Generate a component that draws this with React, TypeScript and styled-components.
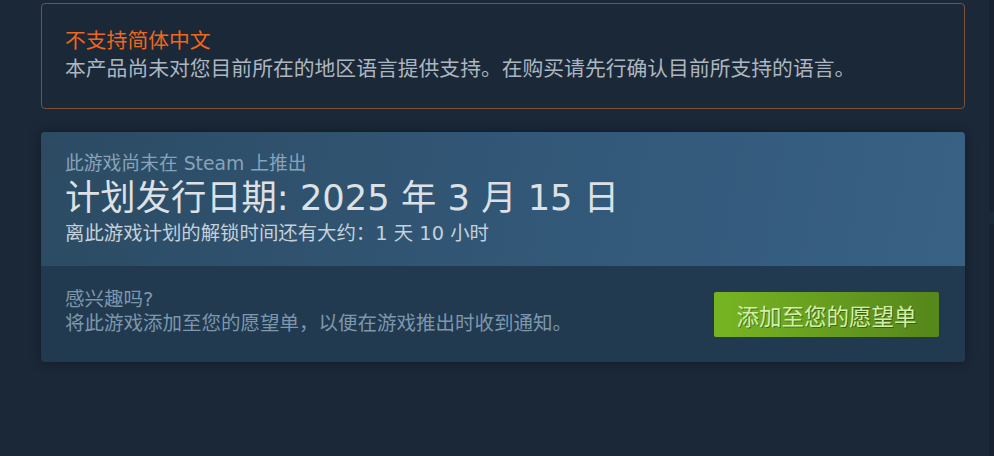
import React, { FC, ReactElement } from 'react';
import styled, { createGlobalStyle } from 'styled-components';

const fontStack = '"DejaVu Sans", "Noto Sans CJK SC", sans-serif';

const GlobalStyle = createGlobalStyle`
  html, body {
    margin: 0;
    padding: 0;
    background: #1b2838;
  }
  body {
    font-family: ${fontStack};
  }
`;

const Page = styled.div`
  display: flex;
  width: 994px;
  height: 456px;
  overflow: hidden;
  background: #1b2838;
`;
const Main = styled.div`
  flex: 1;
  padding: 3px 0 0 41px;
`;
const Column = styled.div`
  width: 924px;
  display: flex;
  flex-direction: column;
  gap: 23px;
`;
const Track = styled.div`
  width: 5px;
  display: flex;
  flex-direction: column;
  gap: 12px;
`;
const TrackPiece = styled.div<{ grow: number }>`
  flex: ${props => props.grow};
  background: #18212f;
`;

const Notice = styled.div`
  border: 1px solid #7b5038;
  border-radius: 4px;
  padding: 21px 23px 27px 23px;
`;
const NoticeTitle = styled.div`
  color: #f0661c;
  font-family: "Noto Sans CJK SC", sans-serif;
  font-size: 20.8px;
  line-height: 28px;
`;
const NoticeText = styled.div`
  color: #acb6c0;
  font-family: "Noto Sans CJK SC", sans-serif;
  font-size: 20.8px;
  line-height: 28px;
`;

const Card = styled.div`
  border-radius: 4px;
  overflow: hidden;
  box-shadow: 0 0 12px rgba(0, 0, 0, 0.35);
`;
const Upper = styled.div`
  background: linear-gradient(100deg, #2c4b63 0%, #33597a 60%, #386184 100%);
  padding: 21px 24px 19px 24px;
`;
const Pre = styled.div`
  color: #87a3ba;
  font-size: 18.8px;
  line-height: 22px;
`;
const Date = styled.div`
  color: #dde1e5;
  font-size: 35.3px;
  line-height: 44px;
  margin-top: 1px;
`;
const Countdown = styled.div`
  color: #c4d0da;
  font-size: 19.4px;
  line-height: 26px;
  margin-top: 1px;
`;
const Lower = styled.div`
  background: #223a4f;
  padding: 22px 26px 25px 24px;
  display: flex;
  align-items: flex-start;
  justify-content: space-between;
`;
const Pitch = styled.div`
  color: #7d97ad;
  font-size: 19.5px;
  line-height: 24px;
`;
const WishButton = styled.button`
  width: 225px;
  height: 45px;
  margin-top: 4px;
  border: none;
  border-radius: 2px;
  background: linear-gradient(to right, #76b322 5%, #57881b 95%);
  color: #d2efa9;
  font-family: "Noto Sans CJK SC", sans-serif;
  font-size: 22.5px;
  text-shadow: 1px 1px 0 rgba(0, 0, 0, 0.35);
  cursor: pointer;
  padding: 0;
`;

const App: FC = (): ReactElement => {
  return (
    <Page>
      <GlobalStyle />
      <Main>
        <Column>
          <Notice>
            <NoticeTitle>不支持简体中文</NoticeTitle>
            <NoticeText>本产品尚未对您目前所在的地区语言提供支持。在购买请先行确认目前所支持的语言。</NoticeText>
          </Notice>
          <Card>
            <Upper>
              <Pre>此游戏尚未在 Steam 上推出</Pre>
              <Date>计划发行日期: 2025 年 3 月 15 日</Date>
              <Countdown>离此游戏计划的解锁时间还有大约：1 天 10 小时</Countdown>
            </Upper>
            <Lower>
              <Pitch>
                <div>感兴趣吗?</div>
                <div>将此游戏添加至您的愿望单，以便在游戏推出时收到通知。</div>
              </Pitch>
              <WishButton>添加至您的愿望单</WishButton>
            </Lower>
          </Card>
        </Column>
      </Main>
      <Track>
        <TrackPiece grow={212} />
        <TrackPiece grow={232} />
      </Track>
    </Page>
  );
};

export default App;
